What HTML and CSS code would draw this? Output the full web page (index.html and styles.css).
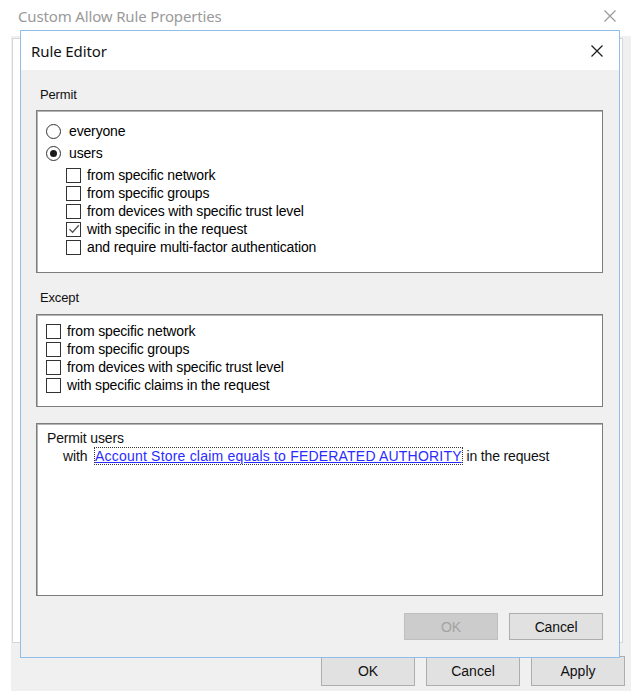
FILE: index.html
```html
<!DOCTYPE html>
<html>
<head>
<meta charset="utf-8">
<link rel="stylesheet" href="styles.css">
</head>
<body>
<div class="screen">
  <div class="bg-titlebar">
    <span class="bg-title">Custom Allow Rule Properties</span>
    <svg class="bg-close" width="12" height="12" viewBox="0 0 12 12"><path d="M0.5 0.5L11.5 11.5M11.5 0.5L0.5 11.5" stroke="#9a9a9a" stroke-width="1.2" fill="none"/></svg>
  </div>
  <div class="bg-window">
    <div class="bg-panel"></div>
    <div class="bg-buttons">
      <div class="btn">OK</div>
      <div class="btn">Cancel</div>
      <div class="btn">Apply</div>
    </div>
  </div>

  <div class="dialog">
    <div class="dlg-titlebar">
      <span class="dlg-title">Rule Editor</span>
      <svg class="dlg-close" width="12" height="12" viewBox="0 0 12 12"><path d="M0.5 0.5L11.5 11.5M11.5 0.5L0.5 11.5" stroke="#1a1a1a" stroke-width="1.2" fill="none"/></svg>
    </div>
    <div class="dlg-body">
      <div class="label label-permit">Permit</div>
      <div class="group group-permit">
        <div class="radio-row first"><span class="radio"></span><span>everyone</span></div>
        <div class="radio-row"><span class="radio checked"></span><span>users</span></div>
        <div class="checks indent">
          <div class="check-row"><span class="box"></span><span>from specific network</span></div>
          <div class="check-row"><span class="box"></span><span>from specific groups</span></div>
          <div class="check-row"><span class="box"></span><span>from devices with specific trust level</span></div>
          <div class="check-row"><span class="box"><svg width="12" height="12" viewBox="0 0 12 12"><path d="M1.5 6.2L4.6 9.3L10.8 2.2" stroke="#555" stroke-width="1.3" fill="none"/></svg></span><span>with specific in the request</span></div>
          <div class="check-row"><span class="box"></span><span>and require multi-factor authentication</span></div>
        </div>
      </div>

      <div class="label label-except">Except</div>
      <div class="group group-except">
        <div class="checks">
          <div class="check-row"><span class="box"></span><span>from specific network</span></div>
          <div class="check-row"><span class="box"></span><span>from specific groups</span></div>
          <div class="check-row"><span class="box"></span><span>from devices with specific trust level</span></div>
          <div class="check-row"><span class="box"></span><span>with specific claims in the request</span></div>
        </div>
      </div>

      <div class="group group-text">
        <div class="text-line">Permit users</div>
        <div class="text-line second">with <span class="link">Account Store claim equals to FEDERATED AUTHORITY</span> in the request</div>
      </div>

      <div class="dlg-buttons">
        <div class="btn disabled">OK</div>
        <div class="btn">Cancel</div>
      </div>
    </div>
  </div>
</div>
</body>
</html>
```

FILE: styles.css
```css
* { box-sizing: border-box; }
html, body { margin: 0; padding: 0; background: #ffffff; }
body { font-family: "Liberation Sans", Arial, sans-serif; color: #000; }

.screen {
  position: relative;
  width: 640px;
  height: 698px;
  overflow: hidden;
  background: #ffffff;
}

.bg-titlebar {
  height: 36px;
  display: flex;
  align-items: center;
  justify-content: space-between;
  padding: 0 24px 4px 18px;
}
.bg-title {
  font-family: "Noto Sans", "Liberation Sans", sans-serif;
  font-size: 15px;
  color: #9a9a9a;
  letter-spacing: -0.15px;
}
.bg-close { display: block; }

.bg-window {
  margin-left: 11px;
  width: 620px;
  height: 655px;
  background: #f0f0f0;
  padding: 2px 0 0 1px;
  display: flex;
  flex-direction: column;
}
.bg-panel {
  width: 611px;
  height: 605px;
  background: #ffffff;
  border: 1px solid #d6d6d6;
}
.bg-buttons {
  display: flex;
  justify-content: flex-end;
  gap: 11px;
  margin-top: 13px;
  padding-right: 6px;
}

.btn {
  width: 94px;
  height: 30px;
  background: #e1e1e1;
  border: 1px solid #adadad;
  font-size: 14px;
  display: flex;
  align-items: center;
  justify-content: center;
  color: #111;
}
.btn.disabled {
  background: #cccccc;
  border-color: #bfbfbf;
  color: #a3a3a3;
}

.dialog {
  position: absolute;
  left: 20px;
  top: 30px;
  width: 600px;
  height: 628px;
  border: 1px solid #8fbfe8;
  background: #f0f0f0;
  display: flex;
  flex-direction: column;
}
.dlg-titlebar {
  height: 39px;
  background: #ffffff;
  display: flex;
  align-items: center;
  justify-content: space-between;
  padding: 0 16px 0 10px;
}
.dlg-title {
  font-family: "Noto Sans", "Liberation Sans", sans-serif;
  font-size: 15px;
  color: #111;
  letter-spacing: -0.1px;
}
.dlg-close { display: block; }

.dlg-body {
  flex: 1;
  display: flex;
  flex-direction: column;
  padding: 0 16px 0 15px;
  font-size: 14px;
  letter-spacing: -0.15px;
}
.label {
  font-size: 13px;
  line-height: 14px;
  padding-left: 4px;
  color: #111;
}
.label-permit { margin-top: 18px; }
.label-except { margin-top: 18px; }

.group {
  background: #ffffff;
  border: 1px solid #7d7d7d;
  box-shadow: inset 1px 1px 0 #b4b4b4;
}
.group-permit {
  margin-top: 8px;
  height: 163px;
  padding: 11px 0 0 9px;
}
.group-except {
  margin-top: 9px;
  height: 93px;
  padding: 7px 0 0 9px;
}
.group-text {
  margin-top: 16px;
  height: 173px;
  padding: 5px 0 0 10px;
}

.radio-row {
  display: flex;
  align-items: center;
  height: 18px;
  gap: 8px;
  margin-bottom: 4px;
}
.radio {
  width: 15px;
  height: 15px;
  border: 1px solid #333;
  border-radius: 50%;
  background: #fff;
  display: flex;
  align-items: center;
  justify-content: center;
}
.radio.checked::after {
  content: "";
  width: 7px;
  height: 7px;
  border-radius: 50%;
  background: #1a1a1a;
}
.checks.indent { padding-left: 20px; margin-top: 1px; }
.check-row {
  display: flex;
  align-items: center;
  height: 18px;
  gap: 6px;
}
.box {
  width: 15px;
  height: 15px;
  border: 1px solid #333;
  background: #fff;
  display: flex;
  align-items: center;
  justify-content: center;
}
.box svg { display: block; }

.text-line { line-height: 18px; color: #111; }
.text-line.second { padding-left: 16px; }
.link {
  display: inline-block;
  line-height: 16px;
  margin-left: 4px;
  margin-right: 1px;
  color: #2b2bff;
  text-decoration: underline;
  letter-spacing: 0.2px;
  outline: 1px dotted #333;
  outline-offset: 0px;
}

.dlg-buttons {
  display: flex;
  justify-content: flex-end;
  gap: 11px;
  margin-top: 17px;
}
.dlg-buttons .btn { height: 27px; }
```
